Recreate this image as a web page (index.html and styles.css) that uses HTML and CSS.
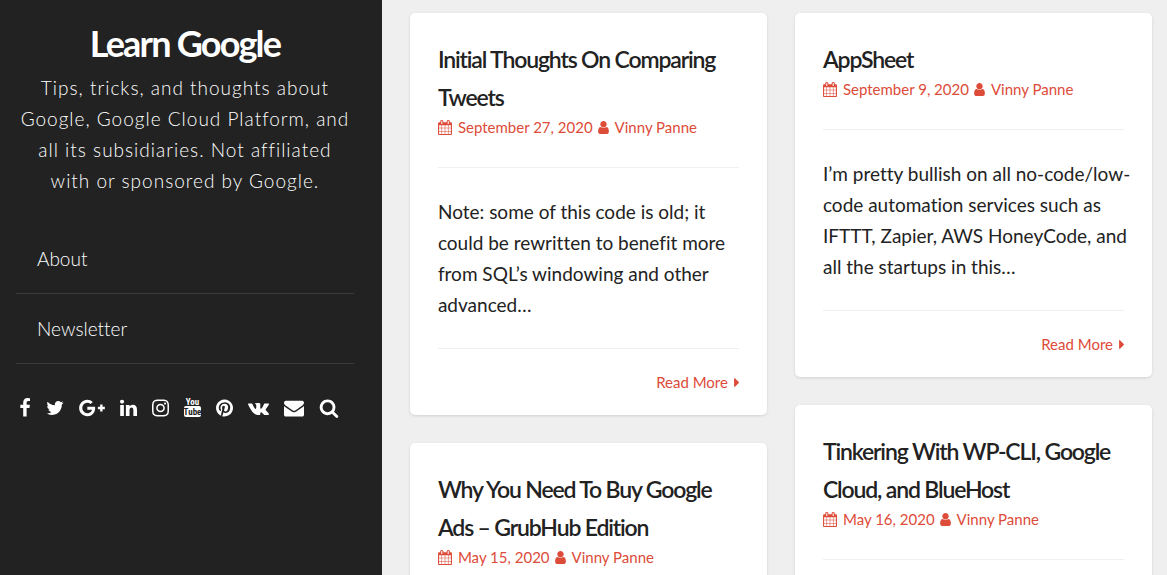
FILE: index.html
```
<!DOCTYPE html>
<html lang="en">
<head>
<meta charset="utf-8">
<title>Learn Google</title>
<link rel="stylesheet" href="styles.css">
</head>
<body>
<svg class="sprite" aria-hidden="true">
  <symbol id="calendar" viewBox="64 0 1664 1792"><path d="M192 1664h288v-288h-288v288zm352 0h320v-288h-320v288zm-352-352h288v-320h-288v320zm352 0h320v-320h-320v320zm-352-384h288v-288h-288v288zm736 736h320v-288h-320v288zm-384-736h320v-288h-320v288zm768 736h288v-288h-288v288zm-384-352h320v-320h-320v320zm-352-864v-288q0-13-9.500-22.500t-22.500-9.500h-64q-13 0-22.500 9.500t-9.500 22.500v288q0 13 9.500 22.500t22.500 9.500h64q13 0 22.500-9.500t9.500-22.500zm736 864h288v-320h-288v320zm-384-384h320v-288h-320v288zm384 0h288v-288h-288v288zm32-480v-288q0-13-9.500-22.500t-22.500-9.500h-64q-13 0-22.500 9.500t-9.500 22.500v288q0 13 9.500 22.500t22.500 9.500h64q13 0 22.500-9.500t9.500-22.500zm384-64v1280q0 52-38 90t-90 38h-1408q-52 0-90-38t-38-90v-1280q0-52 38-90t90-38h128v-96q0-66 47-113t113-47h64q66 0 113 47t47 113v96h384v-96q0-66 47-113t113-47h64q66 0 113 47t47 113v96h128q52 0 90 38t38 90z"/></symbol>
  <symbol id="user" viewBox="256 0 1280 1792"><path d="M1536 1399q0 109-62.500 187t-150.500 78h-854q-88 0-150.500-78t-62.500-187q0-85 8.500-160.500t31.500-152 58.500-131 94-89 134.500-34.500q131 128 313 128t313-128q76 0 134.500 34.500t94 89 58.500 131 31.500 152 8.500 160.500zm-256-887q0 159-112.500 271.500t-271.500 112.500-271.500-112.500-112.500-271.500 112.500-271.500 271.500-112.500 271.500 112.500 112.500 271.500z"/></symbol>
  <symbol id="caret" viewBox="576 0 576 1792"><path d="M1152 896q0 26-19 45l-448 448q-19 19-45 19t-45-19-19-45v-896q0-26 19-45t45-19 45 19l448 448q19 19 19 45z"/></symbol>
</svg>
<div class="page">
  <header class="sidebar">
    <h1 class="site-title"><a href="#">Learn Google</a></h1>
    <p class="tagline">Tips, tricks, and thoughts about Google, Google Cloud Platform, and all its subsidiaries. Not affiliated with or sponsored by Google.</p>
    <nav class="menu">
      <a href="#">About</a>
      <a href="#">Newsletter</a>
    </nav>
    <div class="social">
      <a href="#" aria-label="Facebook"><svg class="w12" viewBox="384 0 1024 1792"><path d="M1343 12v264h-157q-86 0-116 36t-30 108v189h293l-39 296h-254v759h-306v-759h-255v-296h255v-218q0-186 104-288.500t277-102.500q147 0 228 12z"/></svg></a>
      <a href="#" aria-label="Twitter"><svg class="w18" viewBox="64 0 1664 1792"><path d="M1684 408q-67 98-162 167 1 14 1 42 0 130-38 259.500t-115.500 248.500-184.500 210.500-258 146-323 54.500q-271 0-496-145 35 4 78 4 225 0 401-138-105-2-188-64.500t-114-159.500q33 5 61 5 43 0 85-11-112-23-185.500-111.500t-73.500-205.500v-4q68 38 146 41-66-44-105-115t-39-154q0-88 44-163 121 149 294.500 238.500t371.500 99.500q-8-38-8-74 0-134 94.500-228.500t228.500-94.500q140 0 236 102 109-21 205-78-37 115-142 178 93-10 186-50z"/></svg></a>
      <a href="#" aria-label="Google Plus"><svg class="w26" viewBox="0 0 2304 1792"><path d="M1437 913q0 208-87 370.500t-248 254-369 91.500q-149 0-285-58t-234-156-156-234-58-285 58-285 156-234 234-156 285-58q286 0 491 192l-199 191q-117-113-292-113-123 0-227.500 62t-165.500 168.500-61 232.500 61 232.500 165.500 168.500 227.500 62q83 0 152.500-23t114.500-57.500 78.500-78.500 49-83 21.500-74h-416v-252h692q12 63 12 122zm867-122v210h-209v209h-210v-209h-209v-210h209v-209h210v209h209z"/></svg></a>
      <a href="#" aria-label="LinkedIn"><svg class="w17" viewBox="128 0 1536 1792"><path d="M477 625v991h-330v-991h330zm21-306q1 73-50.500 122t-135.500 49h-2q-82 0-132-49t-50-122q0-74 51.500-122.500t134.500-48.500 133 48.500 51 122.500zm1166 729v568h-329v-530q0-105-40.500-164.500t-126.500-59.500q-63 0-105.500 34.500t-63.500 85.500q-11 30-11 81v553h-329q2-399 2-647t-1-296l-1-48h329v144h-2q20-32 41-56t56.500-52 87-43.500 114.500-15.500q171 0 275 113.500t104 332.500z"/></svg></a>
      <a href="#" aria-label="Instagram"><svg class="w17" viewBox="128 0 1536 1792"><path d="M1152 896q0-106-75-181t-181-75-181 75-75 181 75 181 181 75 181-75 75-181zm138 0q0 164-115 279t-279 115-279-115-115-279 115-279 279-115 279 115 115 279zm108-410q0 38-27 65t-65 27-65-27-27-65 27-65 65-27 65 27 27 65zm-502-220q-7 0-76.500-.5t-105.500 0-96.500 3-103 10-71.500 18.500q-50 20-88 58t-58 88q-11 29-18.500 71.500t-10 103-3 96.500 0 105.500.5 76.500-.5 76.500 0 105.500 3 96.500 10 103 18.500 71.500q20 50 58 88t88 58q29 11 71.500 18.500t103 10 96.500 3 105.500 0 76.500-.5 76.500.5 105.500 0 96.500-3 103-10 71.500-18.500q50-20 88-58t58-88q11-29 18.500-71.500t10-103 3-96.500 0-105.500-.5-76.500.5-76.500 0-105.500-3-96.500-10-103-18.500-71.500q-20-50-58-88t-88-58q-29-11-71.500-18.500t-103-10-96.500-3-105.500 0-76.500.5zm768 630q0 229-5 317-10 208-124 322t-322 124q-88 5-317 5t-317-5q-208-10-322-124t-124-322q-5-88-5-317t5-317q10-208 124-322t322-124q88-5 317-5t317 5q208 10 322 124t124 322q5 88 5 317z"/></svg></a>
      <a href="#" aria-label="YouTube"><svg class="w17" viewBox="0 0 17 20"><rect x="0" y="8" width="17" height="11" rx="2"/><text class="yt" x="8.500" y="7" text-anchor="middle">You</text><text class="yt tube" x="8.500" y="17" text-anchor="middle">Tube</text></svg></a>
      <a href="#" aria-label="Pinterest"><svg class="w17" viewBox="128 0 1536 1792"><path d="M1664 896q0 209-103 385.500t-279.500 279.500-385.500 103q-111 0-218-32 59-93 78-164 9-34 54-211 20 39 73 67.500t114 28.500q121 0 216-68.500t147-188.500 52-270q0-114-59.500-214t-172.500-163-255-63q-105 0-196 29t-154.500 77-109 110.500-67 129.500-21.500 134q0 104 40 183t117 111q30 12 38-20 2-7 8-31t8-30q6-23-11-43-51-61-51-151 0-151 104.500-259.500t273.500-108.500q151 0 235.500 82t84.500 213q0 170-68.500 289t-175.500 119q-61 0-98-43.500t-23-104.500q8-35 26.500-93.500t30-103 11.500-75.500q0-50-27-83t-77-33q-62 0-105 57t-43 142q0 73 25 122l-99 418q-17 70-13 177-206-91-333-281t-127-423q0-209 103-385.500t279.500-279.500 385.500-103 385.500 103 279.500 279.500 103 385.500z"/></svg></a>
      <a href="#" aria-label="VK"><svg class="w21" viewBox="64 0 1920 1792"><path d="M1981 520q23 64-150 294-24 32-65 85-78 100-90 131-17 41 14 81 17 21 81 82h1l1 1 1 1 2 2q141 131 191 221 3 5 6.500 12.500t7 26.500-.5 34-25 27.500-59 12.500l-256 4q-24 5-56-5t-52-22l-20-12q-30-21-70-64t-68.500-77.500-61-58-56.500-15.500q-3 1-8 3.500t-17 14.500-21.500 29.500-17 52-6.500 77.500q0 15-3.500 27.500t-7.500 18.500l-4 5q-18 19-53 22h-115q-71 4-146-16.500t-131.500-53-103-66-70.500-57.500l-25-24q-10-10-27.500-30t-71.500-91-106-151-122.500-211-130.500-272q-6-16-6-27t3-16l4-6q15-19 57-19l274-2q12 2 23 6.500t16 8.500l5 3q16 11 24 32 20 50 46 103.500t41 81.500l16 29q29 60 56 104t48.500 68.500 41.500 38.500 34 14 27-5q2-1 5-5t12-22 13.500-47 9.500-81 0-125q-2-40-9-73t-14-46l-6-12q-25-34-85-43-13-2 5-24 16-19 38-30 53-26 239-24 82 1 135 13 20 5 33.500 13.500t20.500 24 10.500 32 3.500 45.500-1 55-2.500 70.500-1.500 82.500q0 11-1 42t-.5 48 3.500 40.500 11.500 39 22.500 24.500q8 2 17 4t26-11 38-34.500 52-67 68-107.500q60-104 107-225 4-10 10-17.500t11-10.500l4-3 5-2.500 13-3 20-.5 288-2q39-5 64 2.500t31 16.500z"/></svg></a>
      <a href="#" aria-label="Email"><svg class="w20" viewBox="0 0 1792 1792"><path d="M1792 710v794q0 66-47 113t-113 47h-1472q-66 0-113-47t-47-113v-794q44 49 101 87 362 246 497 345 57 42 92.500 65.500t94.500 48 110 24.500h2q51 0 110-24.500t94.500-48 92.500-65.500q170-123 498-345 57-39 100-87zm0-294q0 79-49 151t-122 123q-376 261-468 325-10 7-42.500 31t-54 38.500-52 32.500-57.500 27-50 9h-2q-23 0-50-9t-57.500-27-52-32.500-54-38.500-42.500-31q-91-64-262-182.500t-205-142.500q-62-42-117-115.500t-55-136.500q0-78 41.500-130t118.500-52h1472q65 0 112.500 47t47.500 113z"/></svg></a>
      <a href="#" aria-label="Search"><svg class="w20" viewBox="0 0 1792 1792"><path d="M1216 832q0-185-131.500-316.500t-316.500-131.500-316.500 131.500-131.500 316.500 131.500 316.500 316.500 131.500 316.500-131.500 131.500-316.500zm512 832q0 52-38 90t-90 38q-54 0-90-38l-343-342q-179 124-399 124-143 0-273.500-55.500t-225-150-150-225-55.500-273.500 55.500-273.500 150-225 225-150 273.500-55.500 273.500 55.500 225 150 150 225 55.500 273.500q0 220-124 399l343 343q37 37 37 90z"/></svg></a>
    </div>
  </header>
  <main class="posts">
    <div class="column">
      <article class="card">
        <h2 class="card-title"><a href="#">Initial Thoughts On Comparing Tweets</a></h2>
        <div class="meta"><a href="#"><svg class="cal"><use href="#calendar"/></svg>September 27, 2020</a><a href="#"><svg class="usr"><use href="#user"/></svg>Vinny Panne</a></div>
        <p class="excerpt">Note: some of this code is old; it could be rewritten to benefit more from SQL’s windowing and other advanced…</p>
        <div class="more"><a href="#">Read More<svg class="car"><use href="#caret"/></svg></a></div>
      </article>
      <article class="card">
        <h2 class="card-title"><a href="#">Why You Need To Buy Google Ads – GrubHub Edition</a></h2>
        <div class="meta"><a href="#"><svg class="cal"><use href="#calendar"/></svg>May 15, 2020</a><a href="#"><svg class="usr"><use href="#user"/></svg>Vinny Panne</a></div>
      </article>
    </div>
    <div class="column">
      <article class="card">
        <h2 class="card-title"><a href="#">AppSheet</a></h2>
        <div class="meta"><a href="#"><svg class="cal"><use href="#calendar"/></svg>September 9, 2020</a><a href="#"><svg class="usr"><use href="#user"/></svg>Vinny Panne</a></div>
        <p class="excerpt">I’m pretty bullish on all no-code/low-code automation services such as IFTTT, Zapier, AWS HoneyCode, and all the startups in this…</p>
        <div class="more"><a href="#">Read More<svg class="car"><use href="#caret"/></svg></a></div>
      </article>
      <article class="card">
        <h2 class="card-title"><a href="#">Tinkering With WP-CLI, Google Cloud, and BlueHost</a></h2>
        <div class="meta"><a href="#"><svg class="cal"><use href="#calendar"/></svg>May 16, 2020</a><a href="#"><svg class="usr"><use href="#user"/></svg>Vinny Panne</a></div>
      </article>
    </div>
  </main>
</div>
</body>
</html>
```
FILE: styles.css
```
* { box-sizing: border-box; }
body {
  margin: 0;
  background: #efefef;
  color: #222;
  font-family: Lato, "Open Sans", sans-serif;
  font-size: 19px;
  font-variant-ligatures: none;
  line-height: 31px;
}
a { color: inherit; text-decoration: none; }
h1, h2, p { margin: 0; }
svg { display: block; fill: currentColor; flex: none; }
.sprite { display: none; }

.page {
  display: grid;
  grid-template-columns: 18fr 37fr;
  height: 100vh;
  overflow: hidden;
}

.sidebar {
  background: #222;
  color: #fff;
  padding: 15px 28px 15px 16px;
}
.site-title {
  font-size: 36px;
  font-weight: 700;
  line-height: 57px;
  letter-spacing: -0.05em;
  text-align: center;
}
.tagline {
  font-weight: 300;
  letter-spacing: 1px;
  text-align: center;
}
.menu { margin-top: 28px; font-weight: 300; }
.menu a {
  display: block;
  padding: 19px 21px;
  border-bottom: 1px solid #3a3a3a;
}
.social {
  display: flex;
  gap: 15px;
  margin-top: 34px;
  padding-left: 3px;
}
.social svg { height: 20px; }
.w12 { width: 12px; }
.w17 { width: 17px; }
.w18 { width: 18px; }
.w20 { width: 20px; }
.w21 { width: 21px; }
.w26 { width: 26px; }
.yt { font-family: "Roboto Condensed", Roboto, sans-serif; font-weight: 700; font-size: 9px; }
.tube { fill: #222; }

.posts {
  display: grid;
  grid-template-columns: 1fr 1fr;
  gap: 28px;
  padding: 13px 15px 0 28px;
}
.column { display: flex; flex-direction: column; gap: 28px; }
.card {
  flex: none;
  background: #fff;
  border-radius: 5px;
  padding: 27px 28px 22px;
  box-shadow: 0 1px 3px rgba(0, 0, 0, 0.12);
}
.card-title {
  font-size: 23px;
  font-weight: 600;
  line-height: 38px;
  letter-spacing: -0.05em;
}
.meta, .more {
  display: flex;
  color: #dd4b39;
  font-size: 15px;
  line-height: 22px;
}
.meta {
  gap: 5px;
  padding-bottom: 29px;
  border-bottom: 1px solid #efefef;
}
.meta a, .more a { display: flex; align-items: center; gap: 6px; }
.cal { width: 14px; height: 15px; }
.usr { width: 11px; height: 15px; }
.car { width: 5px; height: 15px; }
.excerpt { margin-right: -14px; padding: 28px 0; }
.more {
  justify-content: flex-end;
  padding-top: 22px;
  border-top: 1px solid #efefef;
}
```
